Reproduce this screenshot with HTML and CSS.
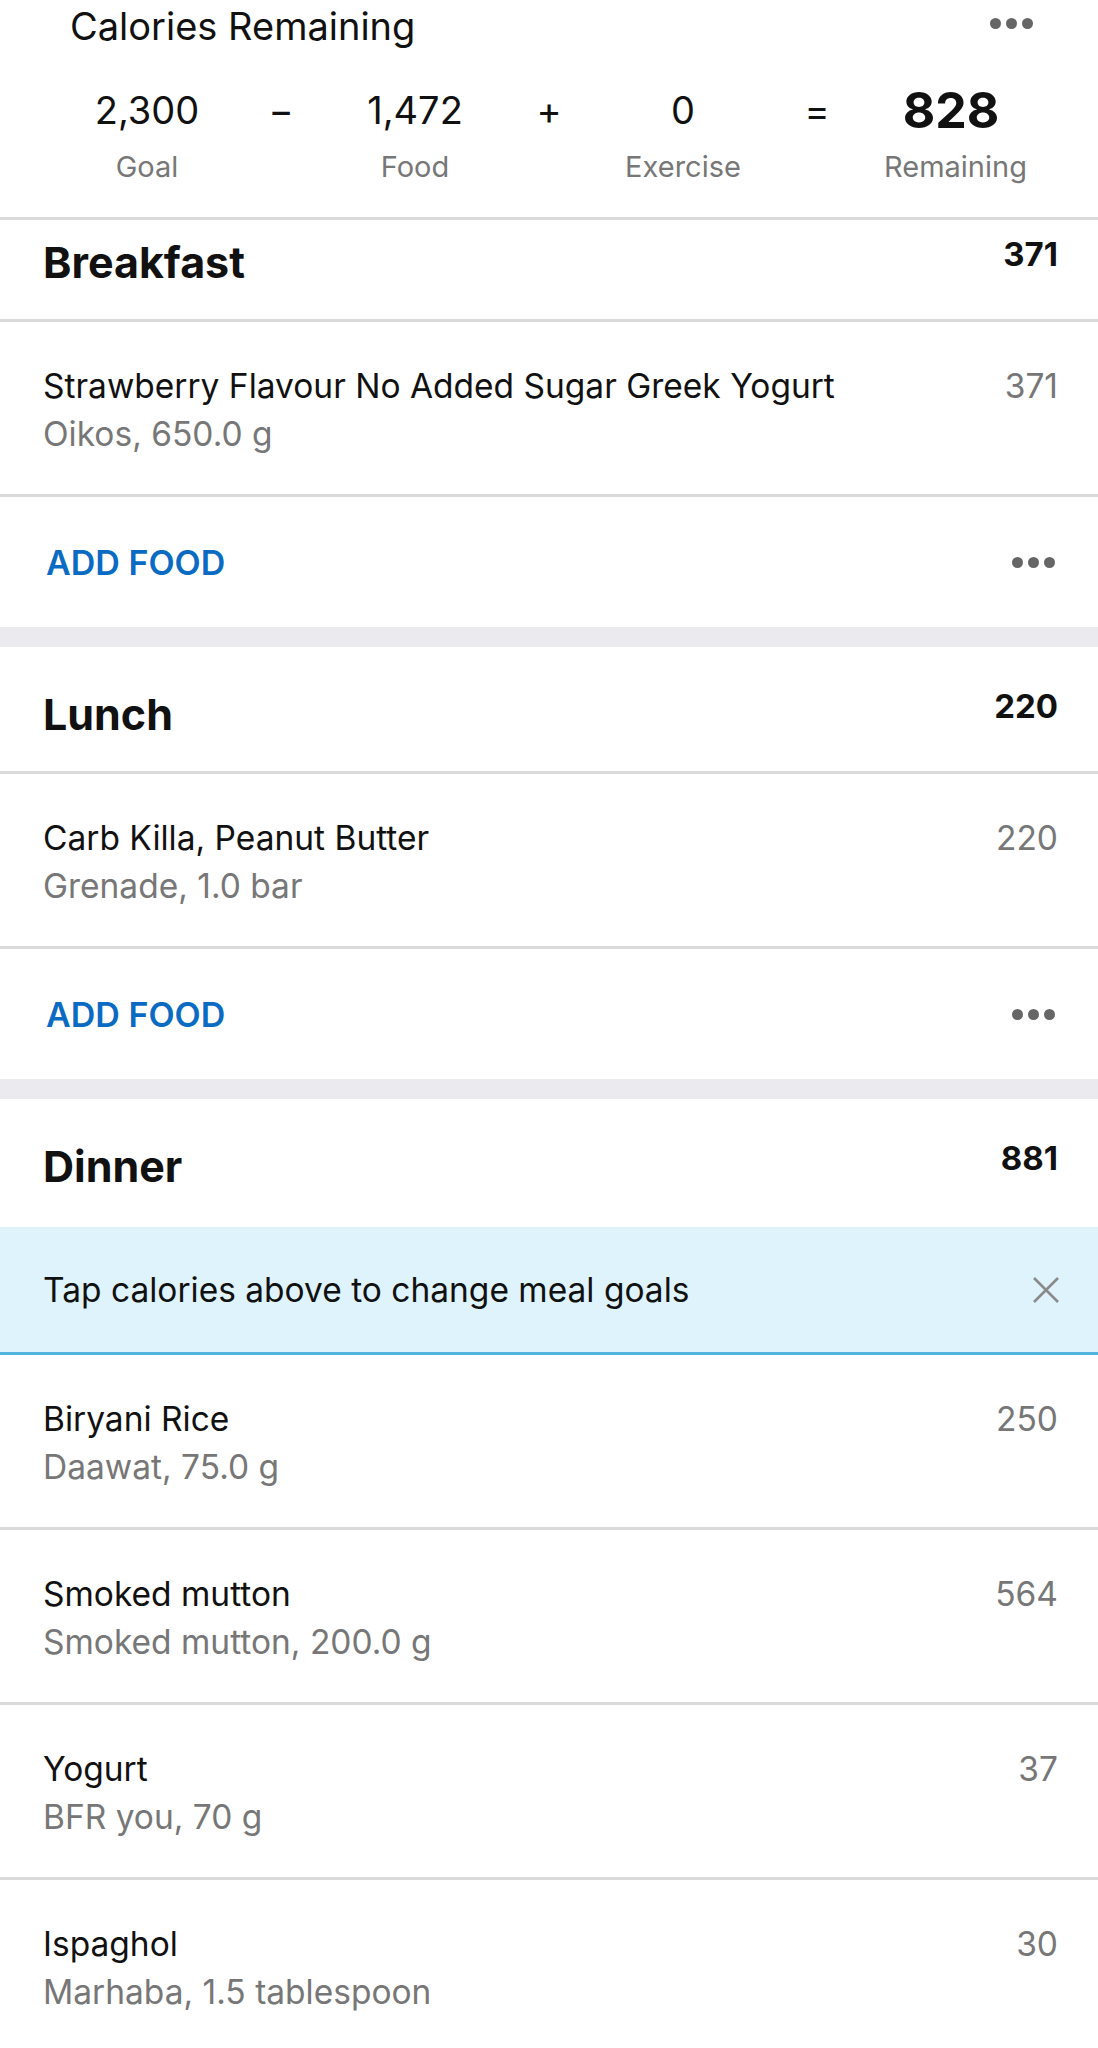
FILE: index.html
```html
<!DOCTYPE html>
<html lang="en">
<head>
    <meta charset="UTF-8">
    <title>Diary</title>
    <link rel="stylesheet" href="styles.css">
</head>
<body>
    <div class="summary">
        <div class="summary-top">
            <span class="summary-title">Calories Remaining</span>
            <span class="dots"><i></i><i></i><i></i></span>
        </div>
        <div class="equation">
            <span class="val">2,300</span>
            <span class="op">&minus;</span>
            <span class="val">1,472</span>
            <span class="op">+</span>
            <span class="val">0</span>
            <span class="op">=</span>
            <span class="val total">828</span>
            <span class="lbl">Goal</span>
            <span></span>
            <span class="lbl">Food</span>
            <span></span>
            <span class="lbl">Exercise</span>
            <span></span>
            <span class="lbl">Remaining</span>
        </div>
    </div>

    <div class="meal-head first">
        <span class="meal-name">Breakfast</span>
        <span class="meal-cal">371</span>
    </div>
    <div class="item">
        <div>
            <div class="item-name">Strawberry Flavour No Added Sugar Greek Yogurt</div>
            <div class="item-sub">Oikos, 650.0 g</div>
        </div>
        <span class="item-cal">371</span>
    </div>
    <div class="add-row">
        <span class="add-food">ADD FOOD</span>
        <span class="dots"><i></i><i></i><i></i></span>
    </div>
    <div class="band"></div>

    <div class="meal-head">
        <span class="meal-name">Lunch</span>
        <span class="meal-cal">220</span>
    </div>
    <div class="item">
        <div>
            <div class="item-name">Carb Killa, Peanut Butter</div>
            <div class="item-sub">Grenade, 1.0 bar</div>
        </div>
        <span class="item-cal">220</span>
    </div>
    <div class="add-row">
        <span class="add-food">ADD FOOD</span>
        <span class="dots"><i></i><i></i><i></i></span>
    </div>
    <div class="band"></div>

    <div class="meal-head no-line">
        <span class="meal-name">Dinner</span>
        <span class="meal-cal">881</span>
    </div>
    <div class="tip">
        <span>Tap calories above to change meal goals</span>
        <svg class="close" width="28" height="28" viewBox="0 0 28 28">
            <path d="M2 2 L26 26 M26 2 L2 26" stroke="#8a8a8a" stroke-width="2.6" fill="none"/>
        </svg>
    </div>
    <div class="item">
        <div>
            <div class="item-name">Biryani Rice</div>
            <div class="item-sub">Daawat, 75.0 g</div>
        </div>
        <span class="item-cal">250</span>
    </div>
    <div class="item">
        <div>
            <div class="item-name">Smoked mutton</div>
            <div class="item-sub">Smoked mutton, 200.0 g</div>
        </div>
        <span class="item-cal">564</span>
    </div>
    <div class="item">
        <div>
            <div class="item-name">Yogurt</div>
            <div class="item-sub">BFR you, 70 g</div>
        </div>
        <span class="item-cal">37</span>
    </div>
    <div class="item">
        <div>
            <div class="item-name">Ispaghol</div>
            <div class="item-sub">Marhaba, 1.5 tablespoon</div>
        </div>
        <span class="item-cal">30</span>
    </div>
</body>
</html>
```

FILE: styles.css
```css
body {
    margin: 0;
    font-family: Inter, "Noto Sans", sans-serif;
    color: #111;
    background: #fff;
}
.summary {
    height: 220px;
    box-sizing: border-box;
    border-bottom: 3px solid #dadada;
}
.summary-top {
    display: flex;
    justify-content: space-between;
    align-items: center;
    height: 52px;
    padding: 0 65px 0 70px;
}
.summary-title {
    font-size: 38px;
    line-height: 52px;
}
.summary-top .dots {
    margin-top: -6px;
}
.dots {
    display: flex;
    gap: 5px;
}
.dots i {
    width: 11px;
    height: 11px;
    border-radius: 50%;
    background: #666;
}
.equation {
    display: grid;
    grid-template-columns: repeat(7, 134px);
    padding: 0 80px;
    margin-top: 30px;
    text-align: center;
}
.val, .op {
    font-size: 38px;
    line-height: 56px;
}
.val.total {
    font-size: 50px;
    font-weight: 700;
}
.lbl {
    margin-top: 11px;
    font-size: 29px;
    line-height: 36px;
    color: #777;
}
.meal-head {
    display: flex;
    justify-content: space-between;
    align-items: flex-start;
    padding: 40px 40px 30px 43px;
    border-bottom: 3px solid #dadada;
}
.meal-head.first {
    padding-top: 15px;
}
.meal-head.no-line {
    border-bottom: 0;
    padding-bottom: 34px;
}
.meal-name {
    font-size: 43px;
    font-weight: 700;
    line-height: 54px;
}
.meal-cal {
    font-size: 33px;
    font-weight: 700;
    line-height: 40px;
    margin-top: -1px;
}
.item {
    display: flex;
    justify-content: space-between;
    align-items: flex-start;
    padding: 40px 40px 36px 43px;
    border-bottom: 3px solid #dadada;
}
.item-name, .item-sub, .item-cal {
    font-size: 33.5px;
    line-height: 48px;
}
.item-sub, .item-cal {
    color: #777;
}
.add-row {
    display: flex;
    justify-content: space-between;
    align-items: center;
    height: 130px;
    padding: 0 43px 0 46px;
    box-sizing: border-box;
}
.add-food {
    font-size: 34px;
    font-weight: 600;
    color: #0b6bc3;
}
.band {
    height: 20px;
    background: #eaeaef;
}
.tip {
    display: flex;
    justify-content: space-between;
    align-items: center;
    height: 128px;
    box-sizing: border-box;
    padding: 0 38px 0 43px;
    background: #dff3fd;
    border-bottom: 3px solid #52b4dd;
    font-size: 33.5px;
}
```
